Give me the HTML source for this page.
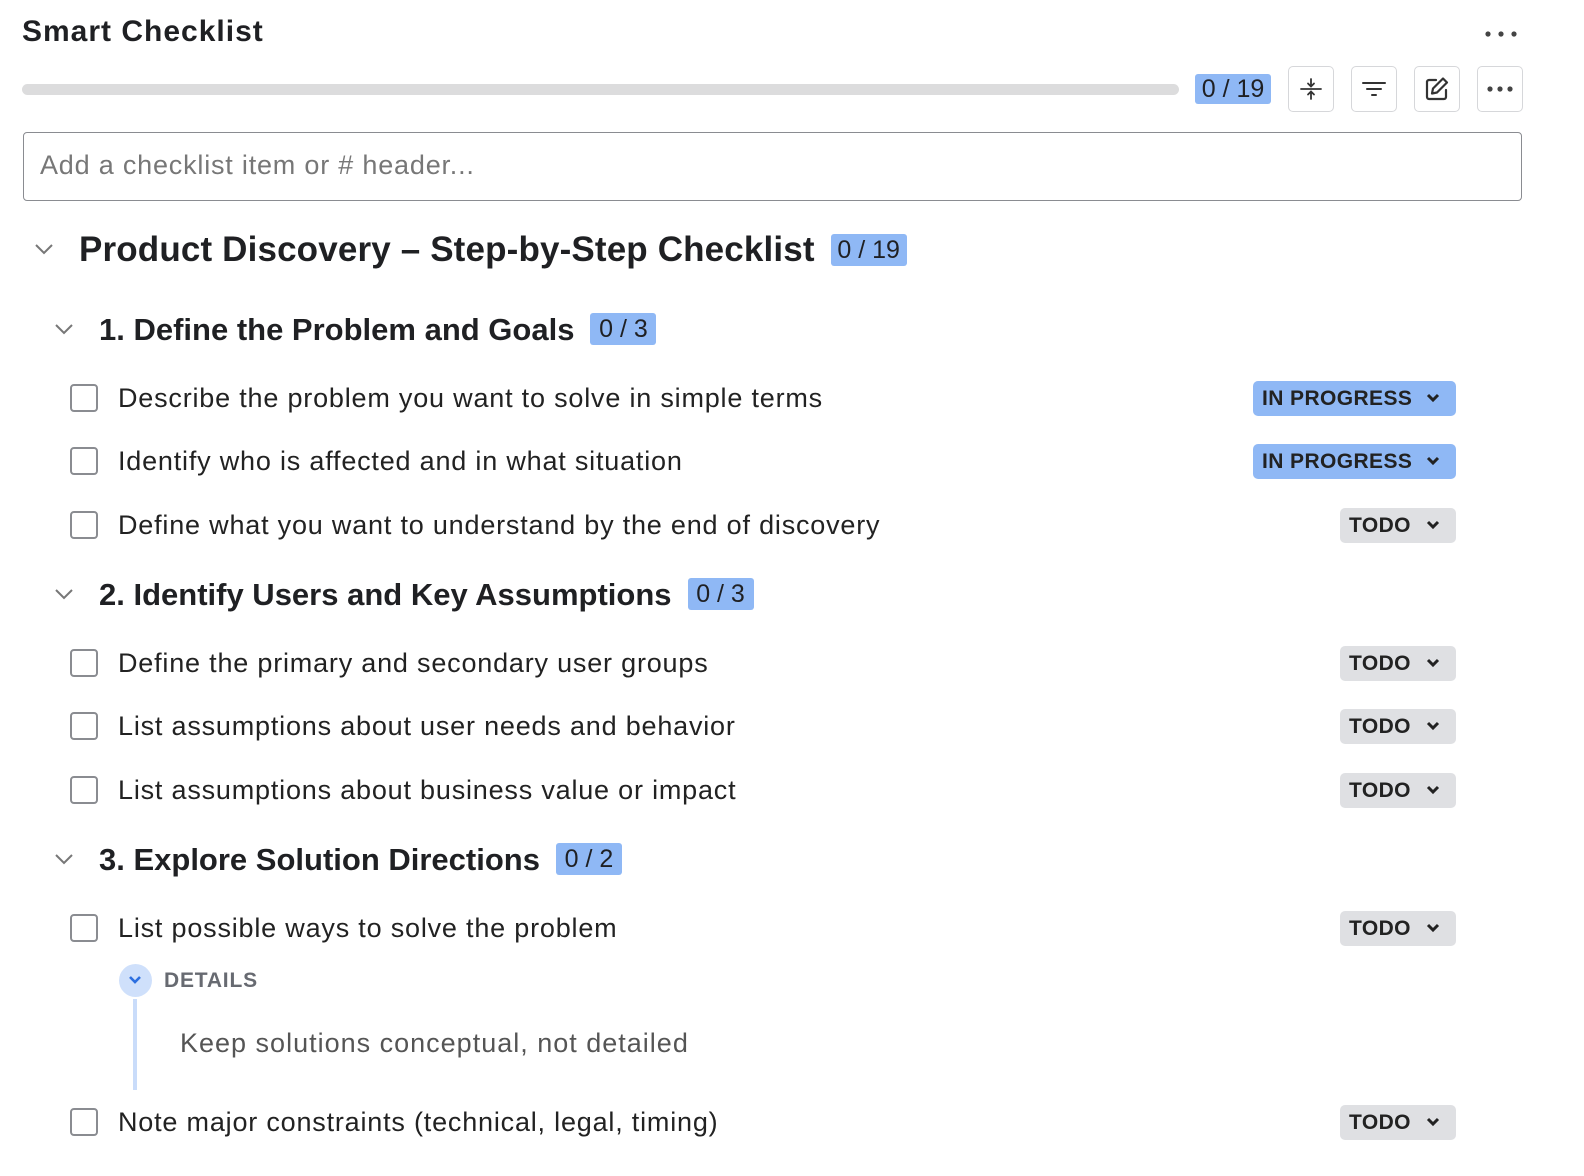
<!DOCTYPE html>
<html><head><meta charset="utf-8"><style>
body{margin:0;width:1584px;height:1176px;background:#fff;font-family:"Liberation Sans",sans-serif;color:#1f2023;position:relative;overflow:hidden}
.a{position:absolute}
.t{position:absolute;white-space:nowrap;line-height:1}
.badge{background:#8fb8f5;border-radius:3px;color:#1f2023;text-align:center;white-space:nowrap;font-weight:normal;letter-spacing:0}
.pb{position:absolute}
.btn{position:absolute;top:66px;width:44px;height:44px;border:1.5px solid #d6d7da;border-radius:5px;display:flex;align-items:center;justify-content:center}
.cb{position:absolute;left:70px;width:24px;height:24px;border:2px solid #8a8c91;border-radius:4px}
.it{position:absolute;left:118px;font-size:27px;letter-spacing:0.8px;line-height:1;white-space:nowrap;color:#222}
.pill{position:absolute;height:35px;border-radius:5px;font-weight:bold;font-size:21px;display:flex;align-items:center;padding-left:9px;box-sizing:border-box;letter-spacing:0.4px;color:#222}
.ip{left:1253px;width:203px;background:#8fb8f5}
.td{left:1340px;width:116px;background:#dfe0e3}
.pill svg{position:absolute;right:16px;top:12px}
.h2{position:absolute;left:99px;font-size:31px;font-weight:bold;line-height:1;white-space:nowrap;letter-spacing:0;display:flex;align-items:center}
.h2 .badge{margin-left:16px;width:66px;height:32px;font-size:25px;line-height:33px}
.chev{position:absolute}
</style></head><body>
<div class="t" style="left:22px;top:17px;font-size:30px;font-weight:bold;letter-spacing:1px">Smart Checklist</div>
<svg class="a" style="left:1484px;top:30px" width="36" height="8"><circle cx="4" cy="4" r="2.6" fill="#444"/><circle cx="17" cy="4" r="2.6" fill="#444"/><circle cx="30" cy="4" r="2.6" fill="#444"/></svg>
<div class="a" style="left:22px;top:84px;width:1157px;height:11px;background:#dcdcdd;border-radius:6px"></div>
<div class="badge pb" style="left:1195px;top:74px;width:76px;height:30px;font-size:25px;line-height:31px">0 / 19</div>
<div class="btn" style="left:1288px"><svg width="24" height="24" viewBox="0 0 24 24" fill="none" stroke="#333" stroke-width="1.8" stroke-linecap="round"><path d="M12 2v7M9 6.5l3 3 3-3M2 12h20M12 22v-7M9 17.5l3-3 3 3"/></svg></div>
<div class="btn" style="left:1351px"><svg width="26" height="24" viewBox="0 0 26 24" fill="none" stroke="#333" stroke-width="2" stroke-linecap="round"><path d="M2 6h22M6 12h14M11 18h4"/></svg></div>
<div class="btn" style="left:1414px"><svg width="28" height="28" viewBox="0 0 28 28" fill="none" stroke="#333" stroke-width="2.2" stroke-linecap="round" stroke-linejoin="round"><path d="M13 5H6a2 2 0 0 0-2 2v15a2 2 0 0 0 2 2h15a2 2 0 0 0 2-2v-7"/><path d="M20 3.5l4 4L14 17.5l-5 1 1-5z"/></svg></div>
<div class="btn" style="left:1477px"><svg width="28" height="8"><circle cx="4" cy="4" r="2.6" fill="#444"/><circle cx="14" cy="4" r="2.6" fill="#444"/><circle cx="24" cy="4" r="2.6" fill="#444"/></svg></div>
<div class="a" style="left:23px;top:132px;width:1497px;height:67px;border:1.5px solid #8a8c91;border-radius:4px"></div>
<div class="t" style="left:40px;top:152px;font-size:27px;letter-spacing:0.8px;color:#777">Add a checklist item or # header...</div>

<svg class="chev" style="left:34px;top:243px" width="20" height="12"><path d="M2 2l8 8 8-8" fill="none" stroke="#777" stroke-width="2"/></svg>
<div class="h2" style="left:79px;top:232px;font-size:35px;letter-spacing:0.15px">Product Discovery – Step-by-Step Checklist<span class="badge" style="width:76px;margin-left:16px">0 / 19</span></div>

<svg class="chev" style="left:54px;top:323px" width="20" height="12"><path d="M2 2l8 8 8-8" fill="none" stroke="#777" stroke-width="2"/></svg>
<div class="h2" style="top:313px">1. Define the Problem and Goals<span class="badge">0 / 3</span></div>

<div class="cb" style="top:384px"></div><div class="it" style="top:385px">Describe the problem you want to solve in simple terms</div>
<div class="pill ip" style="top:381px">IN PROGRESS<svg width="14" height="10"><path d="M2 2l5 5 5-5" fill="none" stroke="#222" stroke-width="3"/></svg></div>
<div class="cb" style="top:447px"></div><div class="it" style="top:448px">Identify who is affected and in what situation</div>
<div class="pill ip" style="top:444px">IN PROGRESS<svg width="14" height="10"><path d="M2 2l5 5 5-5" fill="none" stroke="#222" stroke-width="3"/></svg></div>
<div class="cb" style="top:511px"></div><div class="it" style="top:512px">Define what you want to understand by the end of discovery</div>
<div class="pill td" style="top:508px">TODO<svg width="14" height="10"><path d="M2 2l5 5 5-5" fill="none" stroke="#222" stroke-width="3"/></svg></div>

<svg class="chev" style="left:54px;top:588px" width="20" height="12"><path d="M2 2l8 8 8-8" fill="none" stroke="#777" stroke-width="2"/></svg>
<div class="h2" style="top:578px">2. Identify Users and Key Assumptions<span class="badge">0 / 3</span></div>

<div class="cb" style="top:649px"></div><div class="it" style="top:650px">Define the primary and secondary user groups</div>
<div class="pill td" style="top:646px">TODO<svg width="14" height="10"><path d="M2 2l5 5 5-5" fill="none" stroke="#222" stroke-width="3"/></svg></div>
<div class="cb" style="top:712px"></div><div class="it" style="top:713px">List assumptions about user needs and behavior</div>
<div class="pill td" style="top:709px">TODO<svg width="14" height="10"><path d="M2 2l5 5 5-5" fill="none" stroke="#222" stroke-width="3"/></svg></div>
<div class="cb" style="top:776px"></div><div class="it" style="top:777px">List assumptions about business value or impact</div>
<div class="pill td" style="top:773px">TODO<svg width="14" height="10"><path d="M2 2l5 5 5-5" fill="none" stroke="#222" stroke-width="3"/></svg></div>

<svg class="chev" style="left:54px;top:853px" width="20" height="12"><path d="M2 2l8 8 8-8" fill="none" stroke="#777" stroke-width="2"/></svg>
<div class="h2" style="top:843px">3. Explore Solution Directions<span class="badge">0 / 2</span></div>

<div class="cb" style="top:914px"></div><div class="it" style="top:915px">List possible ways to solve the problem</div>
<div class="pill td" style="top:911px">TODO<svg width="14" height="10"><path d="M2 2l5 5 5-5" fill="none" stroke="#222" stroke-width="3"/></svg></div>

<div class="a" style="left:119px;top:964px;width:33px;height:33px;border-radius:50%;background:#cfe0fb"></div>
<svg class="a" style="left:128px;top:975px" width="14" height="10"><path d="M2 2l5 5 5-5" fill="none" stroke="#2d6fe0" stroke-width="2.6"/></svg>
<div class="a" style="left:133px;top:999px;width:4px;height:91px;background:#c9dcfa"></div>
<div class="t" style="left:164px;top:970px;font-size:21px;font-weight:bold;color:#676a71;letter-spacing:0.8px">DETAILS</div>
<div class="t" style="left:180px;top:1030px;font-size:27px;letter-spacing:1px;color:#555">Keep solutions conceptual, not detailed</div>

<div class="cb" style="top:1108px"></div><div class="it" style="top:1109px">Note major constraints (technical, legal, timing)</div>
<div class="pill td" style="top:1105px">TODO<svg width="14" height="10"><path d="M2 2l5 5 5-5" fill="none" stroke="#222" stroke-width="3"/></svg></div>
</body></html>
